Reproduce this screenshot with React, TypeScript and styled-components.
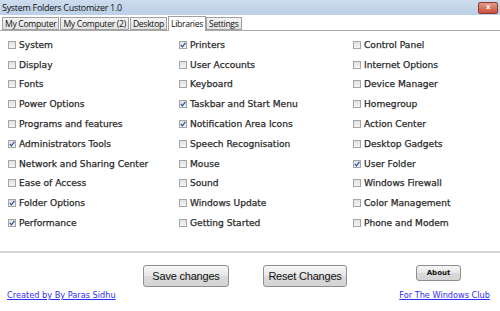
import React from "react";
import styled, { createGlobalStyle } from "styled-components";

const GlobalStyle = createGlobalStyle`
  html, body { margin: 0; padding: 0; background: #fff; }
  body { font-family: "DejaVu Sans", Verdana, sans-serif; }
`;

const Window = styled.div`
  width: 500px;
  height: 311px;
  display: flex;
  flex-direction: column;
  background: #fff;
  overflow: hidden;
`;

const TitleBar = styled.div`
  height: 15px;
  display: flex;
  align-items: center;
  justify-content: space-between;
  padding: 0 2px 0 2px;
  background: linear-gradient(#cddcee, #bccfe6);
  font-family: "Open Sans", sans-serif;
  font-size: 9px;
  letter-spacing: -0.3px;
  color: #111;
`;

const CloseButton = styled.div`
  width: 18px;
  height: 10px;
  border-radius: 2px;
  border: 1px solid #8a3a2c;
  background: linear-gradient(#e59a8c, #c9503c);
  display: flex;
  align-items: center;
  justify-content: center;
  color: #fff;
  font-family: "DejaVu Sans", sans-serif;
  font-size: 7px;
  font-weight: bold;
  line-height: 1;
`;

const TabStrip = styled.div`
  height: 15px;
  display: flex;
  align-items: flex-end;
  padding-left: 2px;
  border-bottom: 1px solid #a8a8a8;
`;

const Tab = styled.div<{ $active?: boolean }>`
  height: ${(p) => (p.$active ? 15 : 13)}px;
  margin-bottom: ${(p) => (p.$active ? -1 : 0)}px;
  margin-right: ${(p) => (p.$active ? 0 : 1)}px;
  padding: 0 2px;
  display: flex;
  align-items: center;
  box-sizing: border-box;
  border: 1px solid #a0a0a0;
  border-bottom: ${(p) => (p.$active ? "none" : "1px solid #a0a0a0")};
  background: ${(p) => (p.$active ? "#fff" : "linear-gradient(#f4f4f4, #e2e2e2)")};
  font-family: "Open Sans", sans-serif;
  font-size: 8.6px;
  letter-spacing: -0.3px;
  color: #111;
  white-space: nowrap;
`;

const Panel = styled.div`
  flex: 1;
  display: grid;
  grid-template-columns: 171px 174px 1fr;
  padding: 4px 0 0 8px;
  border-bottom: 2px solid #d4d4d4;
`;

const Column = styled.div`
  display: flex;
  flex-direction: column;
`;

const Row = styled.label`
  height: 19.8px;
  display: flex;
  align-items: center;
  gap: 3px;
  font-family: "DejaVu Sans", Verdana, sans-serif;
  font-size: 9.1px;
  color: #2a2a2a;
  -webkit-text-stroke: 0.25px #2a2a2a;
  white-space: nowrap;
`;

const Box = styled.span`
  width: 6px;
  height: 6px;
  flex: none;
  border: 1px solid #a5a5a5;
  background: linear-gradient(#e2e2e2, #f4f4f4);
  display: flex;
  align-items: center;
  justify-content: center;
`;

const Footer = styled.div`
  height: 58px;
  display: flex;
  flex-direction: column;
  padding-top: 12px;
  box-sizing: border-box;
`;

const ButtonRow = styled.div`
  display: flex;
  align-items: flex-start;
  padding-left: 143px;
`;

const Button = styled.div<{ $w: number; $small?: boolean; $gap: number }>`
  width: ${(p) => p.$w}px;
  height: ${(p) => (p.$small ? 16 : 22)}px;
  margin-right: ${(p) => p.$gap}px;
  box-sizing: border-box;
  border: 1px solid #8e8e8e;
  border-radius: 3px;
  background: linear-gradient(#f7f7f7, #e6e6e6 50%, #dadada 51%, #d4d4d4);
  display: flex;
  align-items: center;
  justify-content: center;
  white-space: nowrap;
  font-family: ${(p) => (p.$small ? '"DejaVu Sans", sans-serif' : '"Liberation Sans", Arial, sans-serif')};
  font-size: ${(p) => (p.$small ? 7 : 11)}px;
  font-weight: ${(p) => (p.$small ? 600 : 400)};
  letter-spacing: ${(p) => (p.$small ? 0 : -0.2)}px;
  color: #111;
`;

const LinkRow = styled.div`
  display: flex;
  justify-content: space-between;
  padding: 3px 10px 0 7px;
`;

const Link = styled.a`
  font-family: "DejaVu Sans", Verdana, sans-serif;
  font-size: 8.2px;
  color: #2f2ff0;
  text-decoration: underline;
`;

const Check = () => (
  <svg width="6" height="6" viewBox="0 0 6 6">
    <path d="M0.8 3 L2.4 4.8 L5.4 0.8" fill="none" stroke="#2c4fa8" strokeWidth="1.2" />
  </svg>
);

type Item = [string, boolean];

const columns: Item[][] = [
  [
    ["System", false],
    ["Display", false],
    ["Fonts", false],
    ["Power Options", false],
    ["Programs and features", false],
    ["Administrators Tools", true],
    ["Network and Sharing Center", false],
    ["Ease of Access", false],
    ["Folder Options", true],
    ["Performance", true],
  ],
  [
    ["Printers", true],
    ["User Accounts", false],
    ["Keyboard", false],
    ["Taskbar and Start Menu", true],
    ["Notification Area Icons", true],
    ["Speech Recognisation", false],
    ["Mouse", false],
    ["Sound", false],
    ["Windows Update", false],
    ["Getting Started", false],
  ],
  [
    ["Control Panel", false],
    ["Internet Options", false],
    ["Device Manager", false],
    ["Homegroup", false],
    ["Action Center", false],
    ["Desktop Gadgets", false],
    ["User Folder", true],
    ["Windows Firewall", false],
    ["Color Management", false],
    ["Phone and Modem", false],
  ],
];

const tabs = ["My Computer", "My Computer (2)", "Desktop", "Libraries", "Settings"];

export default function App() {
  return (
    <Window>
      <GlobalStyle />
      <TitleBar>
        <span>System Folders Customizer 1.0</span>
        <CloseButton>x</CloseButton>
      </TitleBar>
      <TabStrip>
        {tabs.map((t) => (
          <Tab key={t} $active={t === "Libraries"}>
            {t}
          </Tab>
        ))}
      </TabStrip>
      <Panel>
        {columns.map((col, i) => (
          <Column key={i}>
            {col.map(([label, on]) => (
              <Row key={label}>
                <Box>{on && <Check />}</Box>
                {label}
              </Row>
            ))}
          </Column>
        ))}
      </Panel>
      <Footer>
        <ButtonRow>
          <Button $w={86} $gap={34}>Save changes</Button>
          <Button $w={84} $gap={69}>Reset Changes</Button>
          <Button $w={45} $gap={0} $small>About</Button>
        </ButtonRow>
        <LinkRow>
          <Link href="#">Created by By Paras Sidhu</Link>
          <Link href="#">For The Windows Club</Link>
        </LinkRow>
      </Footer>
    </Window>
  );
}
